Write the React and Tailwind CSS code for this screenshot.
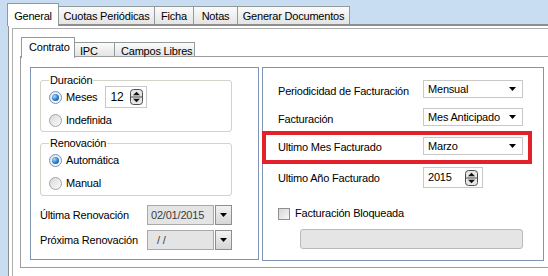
import React from "react";

const Radio = ({ checked }) => (
  <span
    className={`w-[13px] h-[13px] rounded-full border flex items-center justify-center shrink-0 ${
      checked
        ? "border-[#7890ad] bg-gradient-to-br from-[#dfe6ee] to-[#fbfcfd]"
        : "border-[#a2a2a2] bg-gradient-to-br from-[#d9d9d9] to-[#fbfbfb]"
    }`}
  >
    {checked && (
      <span className="w-[7px] h-[7px] rounded-full bg-[radial-gradient(circle_at_35%_35%,#9fdcff,#2a78c8_55%,#0f3f80)]" />
    )}
  </span>
);

const SpinIcon = () => (
  <svg width="13" height="16" viewBox="0 0 13 16">
    <rect x="0.5" y="0.5" width="12" height="15" rx="3" fill="#e6e6e6" stroke="#4d4d4d" />
    <line x1="1" y1="8" x2="12" y2="8" stroke="#4d4d4d" />
    <path d="M3 6.2 L6.5 2.8 L10 6.2 Z" fill="#111" />
    <path d="M3 9.8 L6.5 13.2 L10 9.8 Z" fill="#111" />
  </svg>
);

const Arrow = () => (
  <svg width="7" height="4" viewBox="0 0 7 4">
    <path d="M0 0 L7 0 L3.5 4 Z" fill="#000" />
  </svg>
);

const Select = ({ children }) => (
  <div className="w-[100px] h-[18px] border border-[#c8c8c8] bg-white flex items-center justify-between pl-[4px] pr-[6px]">
    <span>{children}</span>
    <Arrow />
  </div>
);

const DateBox = ({ children }) => (
  <div className="flex gap-[1px]">
    <div className="w-[67px] h-[20px] border border-[#a9a9a9] bg-[#e4e4e4] text-[#3c3c3c] flex items-center pl-[3px]">
      {children}
    </div>
    <div className="w-[17px] h-[20px] border border-[#8e8e8e] bg-gradient-to-b from-[#f2f2f2] to-[#d6d6d6] flex items-center justify-center">
      <Arrow />
    </div>
  </div>
);

const OuterTab = ({ w, children }) => (
  <div
    className={`${w} h-[18px] whitespace-nowrap border-t border-r border-[#919b9c] bg-gradient-to-b from-[#fbfbfb] to-[#e4e4e4] flex items-center justify-center pt-[2px]`}
  >
    {children}
  </div>
);

export default function App() {
  return (
    <div className="w-[548px] h-[276px] overflow-hidden bg-[#c8dcf2] flex flex-col font-['Liberation_Sans',Arial,sans-serif] text-[11px] leading-[13px] tracking-[-0.2px] text-black">
      {/* outer tabs */}
      <div className="h-[24px] shrink-0 flex items-end pl-[7px]">
        <div className="relative z-10 -mb-[2px] h-[23px] w-[52px] bg-white border border-b-0 border-[#919b9c] flex items-center justify-center pt-[2px]">
          General
        </div>
        <OuterTab w="w-[96px]">Cuotas Periódicas</OuterTab>
        <OuterTab w="w-[39px]">Ficha</OuterTab>
        <OuterTab w="w-[44px]">Notas</OuterTab>
        <OuterTab w="w-[112px]">Generar Documentos</OuterTab>
      </div>

      <div className="flex-1 ml-[8px] bg-white border-l border-t-2 border-[#8f8f8f] pt-[2px] pl-[3px]">
        <div className="h-full border-l border-t border-[#adadad] pl-[7px] pt-[8px]">
          {/* inner tabs */}
          <div className="h-[19px] flex items-end pl-[1px] whitespace-nowrap">
            <div className="relative z-10 -mb-[2px] h-[21px] w-[54px] bg-white border border-b-0 border-[#919b9c] pl-[7px] pt-[3px]">
              Contrato
            </div>
            <div className="h-[14px] w-[40px] border-t border-r border-[#919b9c] bg-gradient-to-b from-[#fbfbfb] to-[#e4e4e4] pl-[5px] pt-[2px]">
              IPC
            </div>
            <div className="h-[14px] w-[80px] border-t border-r border-[#919b9c] bg-gradient-to-b from-[#fbfbfb] to-[#e4e4e4] pl-[6px] pt-[2px]">
              Campos Libres
            </div>
          </div>

          <div className="w-[560px] h-[212px] border border-[#9c9c9c] pl-[9px] pt-[10px] flex gap-[3px] items-start">
            {/* left box */}
            <div className="w-[229px] h-[193px] border border-[#8095b5] pl-[9px] pt-[6px] flex flex-col">
              <fieldset className="w-[192px] border border-[#d3d3c8] rounded-[3px] px-[8px] pb-[3px]">
                <legend className="px-[1px] leading-[12px]">Duración</legend>
                <div className="h-[22px] flex items-center">
                  <Radio checked />
                  <span className="ml-[4px]">Meses</span>
                  <div className="ml-[8px] w-[42px] h-[22px] border border-[#c8c8c8] flex items-center justify-between pl-[4px] pr-[3px] text-[12px]">
                    <span>12</span>
                    <SpinIcon />
                  </div>
                </div>
                <div className="mt-[4px] h-[16px] flex items-center">
                  <Radio />
                  <span className="ml-[4px]">Indefinida</span>
                </div>
              </fieldset>

              <fieldset className="mt-[5px] w-[192px] border border-[#d3d3c8] rounded-[3px] px-[8px] pb-[4px]">
                <legend className="px-[1px] leading-[12px]">Renovación</legend>
                <div className="mt-[3px] h-[16px] flex items-center">
                  <Radio checked />
                  <span className="ml-[4px]">Automática</span>
                </div>
                <div className="mt-[7px] h-[16px] flex items-center">
                  <Radio />
                  <span className="ml-[4px]">Manual</span>
                </div>
              </fieldset>

              <div className="mt-[9px] flex items-center">
                <span className="w-[107px]">Última Renovación</span>
                <DateBox>02/01/2015</DateBox>
              </div>
              <div className="mt-[5px] flex items-center">
                <span className="w-[107px]">Próxima Renovación</span>
                <DateBox>
                  <span className="pl-[6px]">/ /</span>
                </DateBox>
              </div>
            </div>

            {/* right box */}
            <div className="w-[282px] h-[194px] border border-[#8095b5] pl-[15px] pt-[12px] flex flex-col">
              <div className="flex h-[18px]">
                <span className="w-[145px] pt-[5px]">Periodicidad de Facturación</span>
                <Select>Mensual</Select>
              </div>
              <div className="mt-[10px] flex h-[18px]">
                <span className="w-[145px] pt-[5px]">Facturación</span>
                <Select>Mes Anticipado</Select>
              </div>
              <div className="mt-[5px] -ml-[16px] w-[270px] border-4 border-[#e3212b] pl-[12px] pt-[2px] pb-[5px]">
                <div className="flex h-[18px]">
                  <span className="w-[145px] pt-[4px]">Ultimo Mes Facturado</span>
                  <Select>Marzo</Select>
                </div>
              </div>
              <div className="mt-[3px] flex">
                <span className="w-[145px] pt-[5px]">Ultimo Año Facturado</span>
                <div className="w-[60px] h-[21px] border border-[#c8c8c8] flex items-center justify-between pl-[4px] pr-[4px]">
                  <span>2015</span>
                  <SpinIcon />
                </div>
              </div>
              <div className="mt-[19px] flex items-center gap-[5px]">
                <span className="w-[12px] h-[12px] border border-[#8f8f8f] bg-gradient-to-br from-[#d6d6d6] to-[#f7f7f7]" />
                <span>Facturación Bloqueada</span>
              </div>
              <div className="mt-[9px] ml-[22px] w-[223px] h-[20px] rounded-[3px] border border-[#bababa] bg-[#e5e5e5]" />
            </div>
          </div>
        </div>
      </div>
    </div>
  );
}
